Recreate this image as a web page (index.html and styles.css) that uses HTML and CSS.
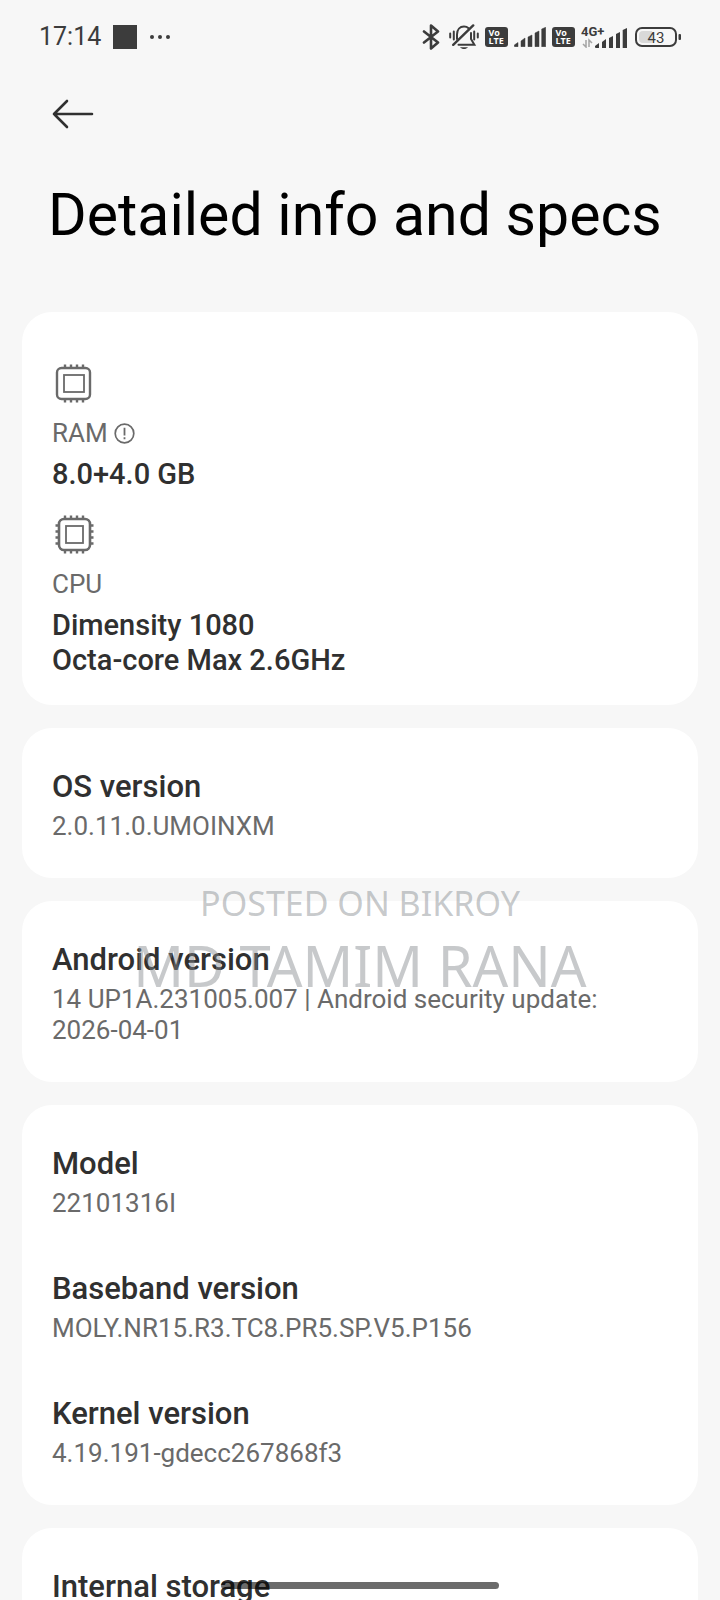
FILE: index.html
```html
<!DOCTYPE html>
<html lang="en">
<head>
    <meta charset="UTF-8">
    <meta name="viewport" content="width=device-width, initial-scale=1.0">
    <title>Detailed info and specs</title>
    <link rel="stylesheet" href="styles.css">
</head>
<body>
    <div class="status-bar">
        <div class="status-left">
            <span class="time">17:14</span>
            <span class="notification"></span>
            <svg width="22" height="6" viewBox="0 0 22 6" fill="#3c3c3c">
                <circle cx="3" cy="3" r="2"/>
                <circle cx="11" cy="3" r="2"/>
                <circle cx="19" cy="3" r="2"/>
            </svg>
        </div>
        <div class="status-right">
            <!-- Bluetooth -->
            <svg class="bluetooth" width="18" height="26" viewBox="0 0 18 26" fill="none" stroke="#3c3c3c" stroke-width="2.6" stroke-linejoin="round" stroke-linecap="round">
                <path d="M2 7.5 L16 18.5 L9 24.5 V1.5 L16 7.5 L2 18.5"/>
            </svg>
            <!-- Silent mode -->
            <svg class="silent" width="30" height="26" viewBox="0 0 30 26" fill="none" stroke="#3c3c3c" stroke-width="2" stroke-linecap="round">
                <path d="M1.2 9.5 V13.5 M4.8 7.5 V15.5 M25.2 7.5 V15.5 M28.8 9.5 V13.5"/>
                <path d="M8 15 V10.5 C8 5.5 11 2.5 15 2.5 C16.8 2.5 18.4 3.1 19.6 4.2"/>
                <path d="M22 9 V15 L25.4 20.8 H9.5"/>
                <path d="M24.2 1.4 L4.2 20.8" stroke-width="2.4"/>
                <path d="M11 23.2 C13 25.6 17 25.6 19 23.2 Z" fill="#3c3c3c" stroke="none"/>
            </svg>
            <svg class="volte" width="23" height="20" viewBox="0 0 23 20">
                <rect width="23" height="20" rx="3" fill="#3c3c3c"/>
                <text x="3.5" y="9">Vo</text>
                <text x="3.5" y="17">LTE</text>
            </svg>
            <svg class="signal" width="32" height="20" viewBox="0 0 32 20" fill="#3c3c3c" stroke="#3c3c3c" stroke-width="0.5" stroke-linejoin="round">
                <path d="M0.3 18 L4 15.5 V19.7 H1 Q0.3 19.7 0.3 19 Z"/>
                <path d="M7 14 L11 11 V19.7 H7 Z"/>
                <path d="M14 10 L18 8 V19.7 H14 Z"/>
                <path d="M21 6 L25 4 V19.7 H21 Z"/>
                <path d="M27.7 2 L31.7 0.3 V19.7 H27.7 Z"/>
            </svg>
            <svg class="volte" width="23" height="20" viewBox="0 0 23 20">
                <rect width="23" height="20" rx="3" fill="#3c3c3c"/>
                <text x="3.5" y="9">Vo</text>
                <text x="3.5" y="17">LTE</text>
            </svg>
            <svg class="network" width="46" height="22" viewBox="0 0 46 22" fill="#3c3c3c">
                <text x="0" y="10">4G+</text>
                <path d="M5 14 V21 L2 18 M8 21 V14 L11 17" fill="none" stroke="#a4a4a4" stroke-width="1.5"/>
                <path d="M14 20 L18 17 V22 H15 Q14 22 14 21 Z"/>
                <path d="M21 16 L25 13 V22 H21 Z"/>
                <path d="M28 12 L32 10 V22 H28 Z"/>
                <path d="M35 8 L39 6 V22 H35 Z"/>
                <path d="M41.7 4 L46 2 V22 H41.7 Z"/>
            </svg>
            <svg class="battery" width="46" height="20" viewBox="0 0 46 20">
                <path d="M8 4 H17 V16 H8 Q4 16 4 12 V8 Q4 4 8 4 Z" fill="#d9d9d9"/>
                <rect x="1" y="1" width="40" height="18" rx="6" fill="none" stroke="#3c3c3c" stroke-width="2"/>
                <rect x="43.5" y="7" width="2.5" height="6" rx="1" fill="#3c3c3c"/>
                <text x="21" y="15.5" text-anchor="middle">43</text>
            </svg>
        </div>
    </div>

    <header>
        <button class="back-button" aria-label="Back">
            <svg width="42" height="30" viewBox="0 0 42 30" fill="none" stroke="#303030" stroke-width="2.6" stroke-linecap="round" stroke-linejoin="round">
                <path d="M15 2 L2 15 L15 28 M2 15 H40"/>
            </svg>
        </button>
        <h1>Detailed info and specs</h1>
    </header>

    <main>
        <section class="card hardware">
            <div class="spec">
                <svg class="chip" width="44" height="44" viewBox="0 0 44 44" fill="none" stroke="#6a6a6a">
                    <rect x="5" y="6" width="33" height="31" rx="4.5" stroke-width="2.4"/>
                    <rect x="12" y="13" width="20" height="17" stroke-width="1.8"/>
                    <path d="M13 2.5 V6 M19 2.5 V6 M25 2.5 V6 M31 2.5 V6 M13 37 V40.5 M19 37 V40.5 M25 37 V40.5 M31 37 V40.5" stroke-width="2.4"/>
                </svg>
                <div class="label">
                    RAM
                    <svg width="21" height="21" viewBox="0 0 21 21" fill="none" stroke="#6a6a6a">
                        <circle cx="10.5" cy="10.5" r="9.3" stroke-width="1.7"/>
                        <path d="M10.5 4.8 V12.4 M10.5 14.2 V16.2" stroke-width="1.8"/>
                    </svg>
                </div>
                <div class="value">8.0+4.0 GB</div>
            </div>
            <div class="spec">
                <svg class="chip" width="44" height="44" viewBox="0 0 44 44" fill="none" stroke="#6a6a6a">
                    <rect x="7" y="6" width="31" height="31" rx="5" stroke-width="2.6"/>
                    <rect x="14" y="13" width="17" height="17" stroke-width="1.8"/>
                    <path d="M13 2.5 V6 M19 2.5 V6 M25 2.5 V6 M31 2.5 V6 M13 37 V40.5 M19 37 V40.5 M25 37 V40.5 M31 37 V40.5" stroke-width="2.4"/>
                    <path d="M3.5 12.5 H7 M3.5 18.5 H7 M3.5 24.5 H7 M3.5 30.5 H7 M38 12.5 H41.5 M38 18.5 H41.5 M38 24.5 H41.5 M38 30.5 H41.5" stroke-width="2.4"/>
                </svg>
                <div class="label">CPU</div>
                <div class="value">Dimensity 1080<br>Octa-core Max 2.6GHz</div>
            </div>
        </section>

        <section class="card">
            <div class="item">
                <h2>OS version</h2>
                <p>2.0.11.0.UMOINXM</p>
            </div>
        </section>

        <section class="card">
            <div class="item">
                <h2>Android version</h2>
                <p>14 UP1A.231005.007 | Android security update: 2026-04-01</p>
            </div>
        </section>

        <section class="card">
            <div class="item">
                <h2>Model</h2>
                <p>22101316I</p>
            </div>
            <div class="item">
                <h2>Baseband version</h2>
                <p>MOLY.NR15.R3.TC8.PR5.SP.V5.P156</p>
            </div>
            <div class="item">
                <h2>Kernel version</h2>
                <p>4.19.191-gdecc267868f3</p>
            </div>
        </section>

        <section class="card">
            <div class="item">
                <h2>Internal storage</h2>
            </div>
        </section>
    </main>

    <div class="watermark">
        <div class="watermark-source">POSTED ON BIKROY</div>
        <div class="watermark-name">MD TAMIM RANA</div>
    </div>
    <div class="home-indicator"></div>
</body>
</html>
```
FILE: styles.css
```css
/* General */
* {
    box-sizing: border-box;
}

body {
    font-family: Roboto, 'Liberation Sans', sans-serif;
    margin: 0;
    height: 100vh;
    overflow: hidden;
    position: relative;
    background-color: #f7f7f7;
    color: #303030;
}

svg {
    display: block;
    flex-shrink: 0;
}

h1,
h2,
p {
    margin: 0;
}

/* Status bar */
.status-bar {
    display: flex;
    justify-content: space-between;
    align-items: center;
    height: 73px;
    padding: 0 39px;
    color: #3c3c3c;
}

.status-left,
.status-right {
    display: flex;
    align-items: center;
}

.status-left {
    gap: 12px;
}

.status-right {
    gap: 6px;
}

.time {
    font-size: 25px;
}

.notification {
    width: 24px;
    height: 24px;
    background-color: #3c3c3c;
}

.bluetooth {
    margin-right: 3px;
}

.volte text {
    font: bold 9px 'Open Sans', sans-serif;
    fill: #fff;
}

.network {
    margin-right: 2px;
}

.network text {
    font: bold 13px Roboto, sans-serif;
}

.battery text {
    font: 15px Roboto, sans-serif;
    fill: #3c3c3c;
}

/* Header */
header {
    padding: 26px 48px 60px;
}

.back-button {
    display: block;
    padding: 0;
    margin-left: 4px;
    border: none;
    background: none;
    cursor: pointer;
}

h1 {
    margin-top: 48px;
    color: #000;
    font-size: 59px;
    font-weight: 400;
    line-height: 75px;
}

/* Cards */
main {
    display: flex;
    flex-direction: column;
    gap: 23px;
    padding: 0 22px;
}

.card {
    padding: 12px 30px 13px;
    background-color: #fff;
    border-radius: 30px;
}

.hardware {
    display: flex;
    flex-direction: column;
    gap: 21px;
    padding: 50px 30px 27px;
}

.label {
    display: flex;
    align-items: center;
    gap: 6px;
    margin-top: 11px;
    color: #6a6a6a;
    font-size: 26px;
    line-height: 32px;
}

.value {
    margin-top: 8px;
    font-size: 29px;
    font-weight: 500;
    line-height: 35px;
}

.item {
    padding: 28px 0 23px;
}

.item h2 {
    font-size: 31px;
    font-weight: 500;
    line-height: 38px;
}

.item p {
    margin-top: 5px;
    color: #6a6a6a;
    font-size: 26px;
    line-height: 31px;
}

/* Overlays */
.watermark {
    position: absolute;
    top: 880px;
    left: 0;
    right: 0;
    color: rgba(130, 135, 140, 0.45);
    font-family: 'Noto Sans', sans-serif;
    text-align: center;
    pointer-events: none;
}

.watermark-source {
    font-size: 34px;
    line-height: 47px;
}

.watermark-name {
    font-size: 56px;
    line-height: 76px;
}

.home-indicator {
    position: absolute;
    bottom: 11px;
    left: 50%;
    width: 278px;
    height: 7px;
    margin-left: -139px;
    border-radius: 4px;
    background-color: rgba(0, 0, 0, 0.58);
}
```
